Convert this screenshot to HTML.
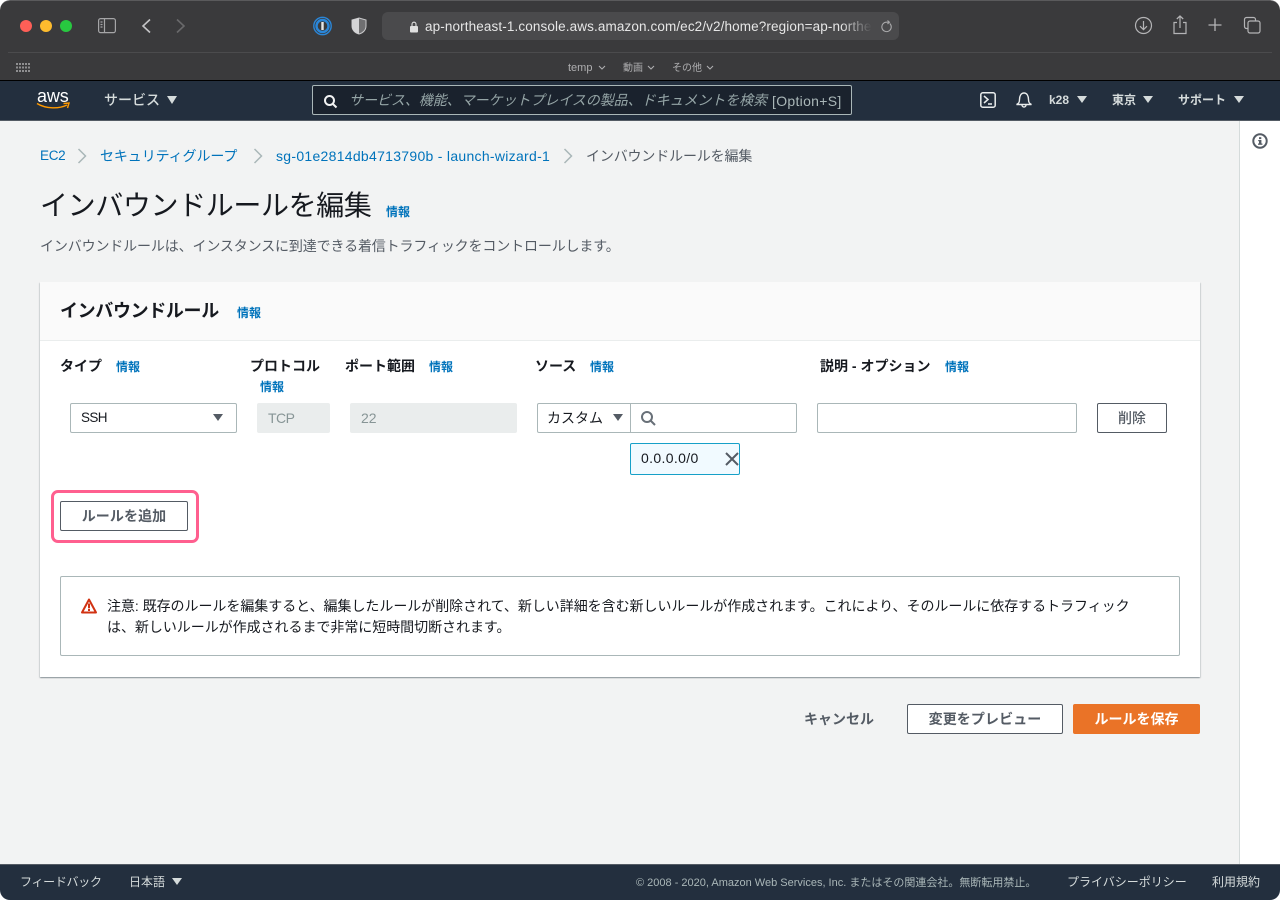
<!DOCTYPE html>
<html lang="ja"><head><meta charset="utf-8"><title>インバウンドルールを編集</title>
<style>
*{box-sizing:border-box}
html,body{margin:0;padding:0;width:1280px;height:900px;overflow:hidden;background:#fff}
body{position:relative;font-family:"Liberation Sans","Noto Sans CJK JP",sans-serif;font-size:14px;color:#16191f}
.a{position:absolute;white-space:nowrap;line-height:20px}
.win{position:absolute;left:0;top:0;width:1280px;height:900px;border-radius:10px;overflow:hidden;background:#f2f3f3}
.l{color:#0073bb}
.b{font-weight:700}
.i{font-size:12px;font-weight:700;color:#0073bb}
.box{position:absolute;background:#fff;border:1px solid #aab7b8;border-radius:2px}
.g{color:#545b64}
.n{color:#d5dbdb;font-size:12px;font-weight:700}
.tri{position:absolute;width:0;height:0;border-left:5px solid transparent;border-right:5px solid transparent;border-top:7px solid #d5dbdb}
.dtri{position:absolute;width:0;height:0;border-left:5px solid transparent;border-right:5px solid transparent;border-top:7px solid #545b64}
.btn{position:absolute;background:#fff;border:1px solid #545b64;border-radius:2px;color:#545b64;font-weight:700;text-align:center;font-size:14px}
svg{position:absolute;overflow:visible}
</style></head><body>
<div class="win">
<!-- Safari chrome -->
<div style="position:absolute;left:0;top:0;width:1280px;height:81px;background:#3a3a3c;border-top:1px solid #5a5a5c;border-radius:10px 10px 0 0"></div>
<div style="position:absolute;left:8px;top:52px;width:1264px;height:1px;background:#4b4b4d"></div>
<div style="position:absolute;left:0;top:80px;width:1280px;height:1px;background:#000"></div>
<div style="position:absolute;left:20px;top:20px;width:12px;height:12px;border-radius:50%;background:#ff5f57"></div>
<div style="position:absolute;left:40px;top:20px;width:12px;height:12px;border-radius:50%;background:#febc2e"></div>
<div style="position:absolute;left:60px;top:20px;width:12px;height:12px;border-radius:50%;background:#28c840"></div>
<svg style="left:98px;top:18px" width="18" height="16" fill="none" stroke="#a5a5a7" stroke-width="1.2"><rect x=".6" y=".6" width="16.8" height="14" rx="2"/><path d="M6.5 .6v14"/><path d="M2.5 4h2M2.5 6.5h2M2.5 9h2"/></svg>
<svg style="left:141px;top:18px" width="12" height="16" fill="none" stroke="#c4c4c6" stroke-width="1.6"><path d="M9 1.5L2 8l7 6.5"/></svg>
<svg style="left:175px;top:18px" width="12" height="16" fill="none" stroke="#69696b" stroke-width="1.6"><path d="M2 1.5L9 8l-7 6.5"/></svg>
<svg style="left:313px;top:16px" width="20" height="20" fill="none"><circle cx="9.5" cy="10" r="8.7" stroke="#2a86d8" stroke-width="1.4"/><circle cx="9.5" cy="10" r="6" stroke="#2a86d8" stroke-width="2.4"/><rect x="8.3" y="6" width="2.4" height="8" fill="#e8e8e8"/></svg>
<svg style="left:351px;top:17px" width="16" height="18"><path d="M8 1L15 3V9C15 13 12 16 8 17 4 16 1 13 1 9V3Z" fill="#6f6f71" stroke="#c8c8ca" stroke-width="1"/><path d="M8 1L1 3V9C1 13 4 16 8 17Z" fill="#d4d4d6"/></svg>
<div style="position:absolute;left:382px;top:12px;width:517px;height:28px;background:#4a4a4c;border-radius:6px"></div>
<svg style="left:409px;top:21px" width="10" height="12"><rect x="1" y="5" width="8" height="6.5" rx="1" fill="#e0e0e0"/><path d="M3 5V3.2a2 2 0 0 1 4 0V5" fill="none" stroke="#e0e0e0" stroke-width="1.1"/></svg>
<div class="a" style="left:425px;top:17px;width:447px;overflow:hidden;font-size:13.5px;letter-spacing:.12px;color:#e6e6e6;-webkit-mask-image:linear-gradient(90deg,#000 93%,transparent)">ap-northeast-1.console.aws.amazon.com/ec2/v2/home?region=ap-northeast-1</div>
<svg style="left:880px;top:20px" width="13" height="14" fill="none" stroke="#a8a8aa" stroke-width="1.1"><path d="M9.8 3.5A4.7 4.7 0 1 1 6.5 2.2H9"/><path d="M7.5 .5L9.4 2.2 7.5 4"/></svg>
<svg style="left:1135px;top:17px" width="18" height="18" fill="none" stroke="#b4b4b6" stroke-width="1.2"><circle cx="8.5" cy="8.5" r="8"/><path d="M8.5 4v8.5M5 9.2l3.5 3.5L12 9.2"/></svg>
<svg style="left:1173px;top:15px" width="14" height="20" fill="none" stroke="#b4b4b6" stroke-width="1.2"><path d="M4 7.5H1v11h12v-11h-3"/><path d="M7 13V1M3.8 4L7 1l3.2 3"/></svg>
<svg style="left:1208px;top:18px" width="14" height="14" fill="none" stroke="#b4b4b6" stroke-width="1.3"><path d="M7 .5v12.5M.5 7h13"/></svg>
<svg style="left:1244px;top:17px" width="17" height="17" fill="none" stroke="#b4b4b6" stroke-width="1.2"><path d="M4 11.5H2.5a2 2 0 0 1-2-2V2.5a2 2 0 0 1 2-2h7a2 2 0 0 1 2 2V4"/><rect x="4" y="4" width="12" height="12" rx="2"/></svg>
<svg style="left:16px;top:63px" width="14" height="10" fill="#8f8f91"><rect x="0" y="0" width="2" height="2"/><rect x="3" y="0" width="2" height="2"/><rect x="6" y="0" width="2" height="2"/><rect x="9" y="0" width="2" height="2"/><rect x="12" y="0" width="2" height="2"/><rect x="0" y="3.500" width="2" height="2"/><rect x="3" y="3.500" width="2" height="2"/><rect x="6" y="3.500" width="2" height="2"/><rect x="9" y="3.500" width="2" height="2"/><rect x="12" y="3.500" width="2" height="2"/><rect x="0" y="7" width="2" height="2"/><rect x="3" y="7" width="2" height="2"/><rect x="6" y="7" width="2" height="2"/><rect x="9" y="7" width="2" height="2"/><rect x="12" y="7" width="2" height="2"/></svg>
<div class="a" style="left:568px;top:58px;font-size:11px;color:#aeaeb0">temp</div>
<div class="a" style="left:623px;top:59px;font-size:10px;color:#aeaeb0">動画</div>
<div class="a" style="left:672px;top:59px;font-size:10px;color:#aeaeb0">その他</div>
<svg style="left:598px;top:65px" width="8" height="6" fill="none" stroke="#aeaeb0" stroke-width="1.1"><path d="M1 1l3 3 3-3"/></svg>
<svg style="left:647px;top:65px" width="8" height="6" fill="none" stroke="#aeaeb0" stroke-width="1.1"><path d="M1 1l3 3 3-3"/></svg>
<svg style="left:706px;top:65px" width="8" height="6" fill="none" stroke="#aeaeb0" stroke-width="1.1"><path d="M1 1l3 3 3-3"/></svg>

<!-- AWS nav -->
<div style="position:absolute;left:0;top:81px;width:1280px;height:40px;background:#232f3e;border-bottom:1px solid #545b64"></div>
<div class="a" style="left:37px;top:86px;font-size:18px;line-height:20px;color:#fff;letter-spacing:-.1px">aws</div>
<svg style="left:36px;top:102px" width="35" height="8" fill="none" stroke="#f90" stroke-width="1.4"><path d="M1 1.500C10 7 23 7 31 3"/><path d="M27.500 1.500L33 1l-1.500 5"/></svg>
<div class="a b" style="left:104px;top:90px;font-size:14px;color:#d5dbdb;font-weight:500">サービス</div>
<div class="tri" style="left:167px;top:96px;border-top-width:8px"></div>
<div style="position:absolute;left:312px;top:85px;width:540px;height:30px;background:#1a222d;border:1px solid #aab7b8;border-radius:2px"></div>
<svg style="left:324px;top:95px" width="13" height="13" fill="none" stroke="#f2f3f3" stroke-width="2"><circle cx="5.500" cy="5.500" r="4.500"/><path d="M8.800 8.800L12.500 12.500"/></svg>
<div class="a" style="left:349px;top:90px;font-size:14px;letter-spacing:-.05px;font-style:italic;color:#95a5a6;width:420px;overflow:hidden">サービス、機能、マーケットプレイスの製品、ドキュメントを検索</div>
<div class="a" style="left:772px;top:91px;font-size:14px;letter-spacing:.3px;color:#aab7b8">[Option+S]</div>
<svg style="left:980px;top:92px" width="16" height="16" fill="none" stroke="#eaeded" stroke-width="1.500"><rect x=".8" y=".8" width="14.400" height="14.400" rx="2"/><path d="M4 4l4 3.500-4 3.500M8 12h4"/></svg>
<svg style="left:1016px;top:91px" width="16" height="17" fill="none" stroke="#eaeded" stroke-width="1.400"><path d="M.5 13.500c2.500-1 3-2.500 3-5C3.500 5 5 2 8 2s4.500 3 4.500 6.500c0 2.500.5 4 3 5z"/><path d="M6 14a2 2 0 0 0 4 0"/></svg>
<div class="a" style="left:1049px;top:90px;font-size:12px;font-weight:700;color:#d5dbdb">k28</div>
<div class="tri" style="left:1077px;top:96px"></div>
<div class="a n" style="left:1112px;top:90px">東京</div>
<div class="tri" style="left:1143px;top:96px"></div>
<div class="a n" style="left:1178px;top:90px">サポート</div>
<div class="tri" style="left:1234px;top:96px"></div>

<!-- Right rail -->
<div style="position:absolute;left:1239px;top:121px;width:41px;height:743px;background:#fff;border-left:1px solid #d5dbdb"></div>
<svg style="left:1252px;top:133px" width="16" height="16"><circle cx="8" cy="8" r="6.700" fill="none" stroke="#545b64" stroke-width="2"/><rect x="7" y="7" width="2.400" height="4.500" fill="#545b64"/><rect x="6" y="10.500" width="4.400" height="1.300" fill="#545b64"/><rect x="6.200" y="7" width="2" height="1.200" fill="#545b64"/><rect x="7" y="4.200" width="2.300" height="1.900" fill="#545b64"/></svg>

<!-- Breadcrumbs -->
<div class="a l" style="left:40px;top:146px;font-size:13.500px;letter-spacing:-.3px">EC2</div>
<svg class="c" style="left:77px;top:148px" width="10" height="16" fill="none" stroke="#aab7b8" stroke-width="1.500"><path d="M1.500 1l7 7-7 7"/></svg>
<div class="a l" style="left:100px;top:146px;letter-spacing:-.1px">セキュリティグループ</div>
<svg style="left:253px;top:148px" width="10" height="16" fill="none" stroke="#aab7b8" stroke-width="1.500"><path d="M1.500 1l7 7-7 7"/></svg>
<div class="a l" style="left:276px;top:146px;letter-spacing:.29px">sg-01e2814db4713790b - launch-wizard-1</div>
<svg style="left:563px;top:148px" width="10" height="16" fill="none" stroke="#aab7b8" stroke-width="1.500"><path d="M1.500 1l7 7-7 7"/></svg>
<div class="a g" style="left:586px;top:146px;letter-spacing:-.15px">インバウンドルールを編集</div>

<!-- Title -->
<div class="a" style="left:40px;top:189px;font-size:28px;line-height:34px;letter-spacing:-.38px;color:#16191f">インバウンドルールを編集</div>
<div class="a i" style="left:386px;top:202px">情報</div>
<div class="a g" style="left:40px;top:236px;letter-spacing:-.14px">インバウンドルールは、インスタンスに到達できる着信トラフィックをコントロールします。</div>

<!-- Panel -->
<div style="position:absolute;left:40px;top:282px;width:1160px;height:395px;background:#fff;box-shadow:0 1px 1px 0 rgba(0,28,36,.3),1px 1px 1px 0 rgba(0,28,36,.1),-1px 1px 1px 0 rgba(0,28,36,.1)"></div>
<div style="position:absolute;left:40px;top:282px;width:1160px;height:59px;background:#fafafa;border-bottom:1px solid #eaeded"></div>
<div class="a b" style="left:60px;top:299px;font-size:18px;line-height:24px;letter-spacing:-.35px">インバウンドルール</div>
<div class="a i" style="left:237px;top:303px">情報</div>

<div class="a b" style="left:60px;top:356px">タイプ</div>
<div class="a i" style="left:116px;top:357px">情報</div>
<div class="a b" style="left:250px;top:356px">プロトコル</div>
<div class="a i" style="left:260px;top:377px">情報</div>
<div class="a b" style="left:345px;top:356px">ポート範囲</div>
<div class="a i" style="left:429px;top:357px">情報</div>
<div class="a b" style="left:535px;top:356px">ソース</div>
<div class="a i" style="left:590px;top:357px">情報</div>
<div class="a b" style="left:820px;top:356px">説明 - オプション</div>
<div class="a i" style="left:945px;top:357px">情報</div>

<div class="box" style="left:70px;top:403px;width:167px;height:30px"></div>
<div class="a" style="left:81px;top:408px;font-size:13.500px;letter-spacing:-.6px">SSH</div>
<div class="dtri" style="left:213px;top:414px"></div>
<div style="position:absolute;left:257px;top:403px;width:73px;height:30px;background:#eaeded;border-radius:2px"></div>
<div class="a" style="left:268px;top:408px;letter-spacing:-.5px;color:#879596">TCP</div>
<div style="position:absolute;left:350px;top:403px;width:167px;height:30px;background:#eaeded;border-radius:2px"></div>
<div class="a" style="left:361px;top:408px;color:#879596">22</div>

<div class="box" style="left:537px;top:403px;width:94px;height:30px;border-radius:2px 0 0 2px"></div>
<div class="a" style="left:547px;top:408px">カスタム</div>
<div class="dtri" style="left:613px;top:414px"></div>
<div class="box" style="left:630px;top:403px;width:167px;height:30px;border-radius:0 2px 2px 0"></div>
<svg style="left:641px;top:411px" width="15" height="15" fill="none" stroke="#687078" stroke-width="2"><circle cx="6" cy="6" r="5"/><path d="M9.500 9.500L14 14"/></svg>
<div style="position:absolute;left:630px;top:443px;width:110px;height:32px;background:#f1faff;border:1px solid #16a0c8;border-radius:2px"></div>
<div class="a" style="left:641px;top:448px;letter-spacing:.35px">0.0.0.0/0</div>
<svg style="left:725px;top:452px" width="14" height="14" fill="none" stroke="#545b64" stroke-width="2"><path d="M1 1l12 12M13 1L1 13"/></svg>

<div class="box" style="left:817px;top:403px;width:260px;height:30px"></div>
<div class="btn" style="left:1097px;top:403px;width:70px;height:30px;line-height:28px;font-weight:500">削除</div>

<div style="position:absolute;left:51px;top:490px;width:148px;height:53px;border:3px solid #ff5f8f;border-radius:7px"></div>
<div class="btn" style="left:60px;top:501px;width:128px;height:30px;line-height:28px;letter-spacing:.1px">ルールを追加</div>

<div class="box" style="left:60px;top:576px;width:1120px;height:80px"></div>
<svg style="left:81px;top:598px" width="16" height="16"><path d="M8 1.500L15 14.500H1Z" fill="#fff" stroke="#d13212" stroke-width="2" stroke-linejoin="round"/><rect x="7" y="5.500" width="2" height="4.800" fill="#d13212"/><rect x="7" y="11" width="2" height="2" fill="#d13212"/></svg>
<div class="a" style="left:107px;top:596px;letter-spacing:-.04px;color:#16191f">注意: 既存のルールを編集すると、編集したルールが削除されて、新しい詳細を含む新しいルールが作成されます。これにより、そのルールに依存するトラフィック</div>
<div class="a" style="left:107px;top:617px;letter-spacing:-.04px;color:#16191f">は、新しいルールが作成されるまで非常に短時間切断されます。</div>

<!-- Actions -->
<div class="a b g" style="left:804px;top:709px">キャンセル</div>
<div class="btn" style="left:907px;top:704px;width:156px;height:30px;line-height:28px;letter-spacing:.1px">変更をプレビュー</div>
<div class="btn" style="left:1073px;top:704px;width:127px;height:30px;line-height:30px;background:#ea7327;border:0;color:#fff">ルールを保存</div>

<!-- Footer -->
<div style="position:absolute;left:0;top:864px;width:1280px;height:36px;background:#232f3e;border-top:1px solid #545b64"></div>
<div class="a" style="left:20px;top:872px;font-size:12px;letter-spacing:-.3px;color:#d5dbdb">フィードバック</div>
<div class="a" style="left:129px;top:872px;font-size:12px;color:#d5dbdb">日本語</div>
<div class="tri" style="left:172px;top:878px"></div>
<div class="a" style="left:636px;top:873px;font-size:11px;color:#aab7b8">© 2008 - 2020, Amazon Web Services, Inc. またはその関連会社。無断転用禁止。</div>
<div class="a" style="left:1067px;top:872px;font-size:12px;color:#d5dbdb">プライバシーポリシー</div>
<div class="a" style="left:1212px;top:872px;font-size:12px;color:#d5dbdb">利用規約</div>
</div>
</body></html>
